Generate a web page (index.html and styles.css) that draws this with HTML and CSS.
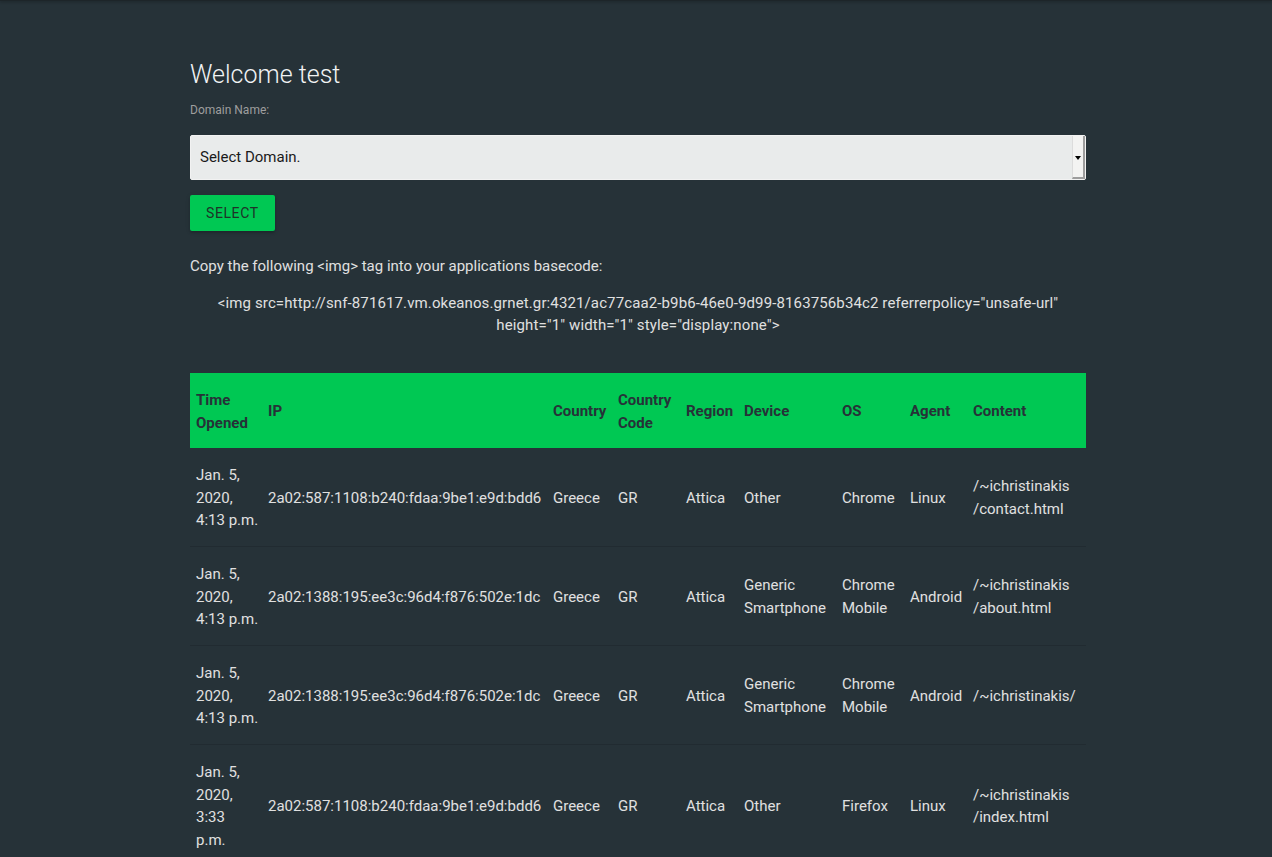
FILE: index.html
```html
<!DOCTYPE html>
<html>
<head>
<meta charset="utf-8">
<title>Welcome</title>
<link rel="stylesheet" href="styles.css">
</head>
<body>
<div class="topbar"></div>
<main class="container">
  <h5 class="title">Welcome test</h5>
  <label class="label">Domain Name:</label>
  <div class="select">
    <span class="select-text">Select Domain.</span>
    <span class="select-arrow"><span class="tri"></span></span>
  </div>
  <button class="btn">Select</button>
  <p class="copy">Copy the following &lt;img&gt; tag into your applications basecode:</p>
  <p class="code">&lt;img src=http://snf-871617.vm.okeanos.grnet.gr:4321/ac77caa2-b9b6-46e0-9d99-8163756b34c2 referrerpolicy="unsafe-url" height="1" width="1" style="display:none"&gt;</p>

  <table class="log">
    <colgroup>
      <col class="c-time"><col class="c-ip"><col class="c-country"><col class="c-code"><col class="c-region"><col class="c-device"><col class="c-os"><col class="c-agent"><col class="c-content">
    </colgroup>
    <thead>
      <tr>
        <th>Time Opened</th><th>IP</th><th>Country</th><th>Country Code</th><th>Region</th><th>Device</th><th>OS</th><th>Agent</th><th>Content</th>
      </tr>
    </thead>
    <tbody>
      <tr>
        <td>Jan. 5, 2020, <span class="nw">4:13 p.m.</span></td><td>2a02:587:1108:b240:fdaa:9be1:e9d:bdd6</td><td>Greece</td><td>GR</td><td>Attica</td><td>Other</td><td>Chrome</td><td>Linux</td><td>/~ichristinakis<wbr>/contact.html</td>
      </tr>
      <tr>
        <td>Jan. 5, 2020, <span class="nw">4:13 p.m.</span></td><td>2a02:1388:195:ee3c:96d4:f876:502e:1dc</td><td>Greece</td><td>GR</td><td>Attica</td><td>Generic Smartphone</td><td>Chrome Mobile</td><td>Android</td><td>/~ichristinakis<wbr>/about.html</td>
      </tr>
      <tr>
        <td>Jan. 5, 2020, <span class="nw">4:13 p.m.</span></td><td>2a02:1388:195:ee3c:96d4:f876:502e:1dc</td><td>Greece</td><td>GR</td><td>Attica</td><td>Generic Smartphone</td><td>Chrome Mobile</td><td>Android</td><td>/~ichristinakis/</td>
      </tr>
      <tr>
        <td>Jan. 5, 2020, 3:33 p.m.</td><td>2a02:587:1108:b240:fdaa:9be1:e9d:bdd6</td><td>Greece</td><td>GR</td><td>Attica</td><td>Other</td><td>Firefox</td><td>Linux</td><td>/~ichristinakis<wbr>/index.html</td>
      </tr>
    </tbody>
  </table>
</main>
</body>
</html>
```

FILE: styles.css
```css
html, body {
  margin: 0;
  padding: 0;
}
body {
  background: #263238;
  color: #e0e0e0;
  font-family: Roboto, "Liberation Sans", sans-serif;
  font-size: 15px;
  line-height: 1.5;
  overflow: hidden;
  height: 857px;
}
.topbar {
  height: 1px;
  background: #1d2529;
  box-shadow: 0 1px 3px rgba(0, 0, 0, 0.45);
}
.container {
  width: 896px;
  margin-left: 190px;
  padding-top: 60px;
}
.title {
  margin: 0;
  font-size: 25px;
  line-height: 27px;
  font-weight: 300;
  color: #f1f3f4;
}
.label {
  display: block;
  margin-top: 13px;
  font-size: 12px;
  line-height: 18px;
  color: #9e9e9e;
}
.select {
  margin-top: 16px;
  height: 45px;
  box-sizing: border-box;
  background: #e9ebeb;
  border: 1px solid #f2f2f2;
  border-radius: 2px;
  display: flex;
  align-items: stretch;
  color: #1a1a1a;
}
.select-text {
  flex: 1;
  display: flex;
  align-items: center;
  padding-left: 9px;
  font-size: 15px;
}
.select-arrow {
  width: 10px;
  background: #f3f3f2;
  border-right: 2px solid #9d9d9d;
  border-bottom: 2px solid #9d9d9d;
  border-left: 1px solid #dcdcdc;
  display: flex;
  align-items: center;
  justify-content: center;
}
.tri {
  width: 0;
  height: 0;
  border-left: 3px solid transparent;
  border-right: 3px solid transparent;
  border-top: 4px solid #000;
  margin-top: 2px;
}
.btn {
  display: block;
  margin-top: 15px;
  height: 36px;
  padding: 0 16px;
  border: none;
  border-radius: 2px;
  background: #00c853;
  color: #1e3328;
  font-family: inherit;
  font-size: 14px;
  letter-spacing: 0.6px;
  text-transform: uppercase;
  box-shadow: 0 2px 2px rgba(0, 0, 0, 0.14), 0 1px 5px rgba(0, 0, 0, 0.12);
}
.copy {
  margin: 24px 0 0;
}
.code {
  margin: 14px 0 0;
  text-align: center;
  letter-spacing: 0.12px;
}
.log {
  margin-top: 36px;
  width: 896px;
  border-collapse: collapse;
  table-layout: fixed;
}
.c-time { width: 72px; }
.c-ip { width: 285px; }
.c-country { width: 65px; }
.c-code { width: 68px; }
.c-region { width: 58px; }
.c-device { width: 98px; }
.c-os { width: 68px; }
.c-agent { width: 63px; }
.c-content { width: 119px; }
.log thead tr {
  background: #00c853;
}
.log th {
  padding: 16.5px 4px 13.5px 6px;
  text-align: left;
  vertical-align: middle;
  font-weight: 700;
  color: #263238;
}
.log td {
  padding: 16.5px 4px 14px 6px;
  vertical-align: middle;
  color: #e0e0e0;
}
.log tbody tr {
  border-bottom: 1px solid rgba(0, 0, 0, 0.12);
}
.nw {
  white-space: nowrap;
}
```
